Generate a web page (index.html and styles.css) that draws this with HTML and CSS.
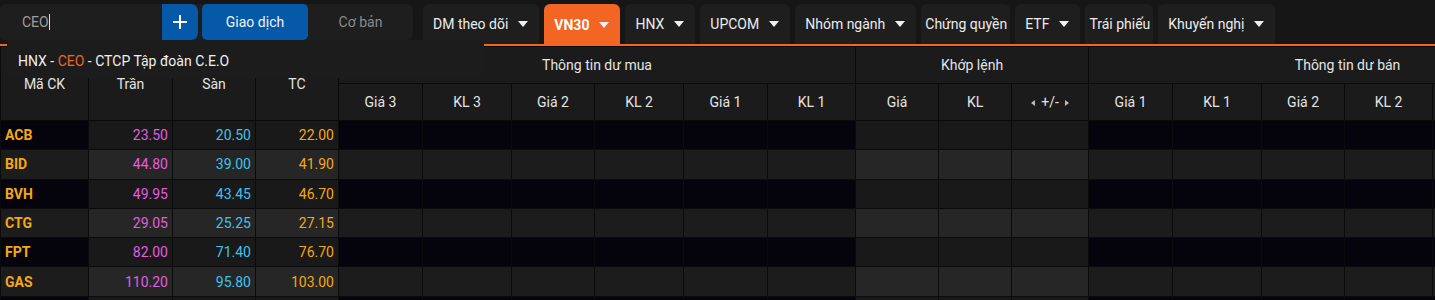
FILE: index.html
```html
<!DOCTYPE html>
<html lang="vi">
  <head>
    <meta charset="UTF-8" />
    <title>Bảng giá VN30</title>
    <link rel="stylesheet" href="styles.css">
  </head>
  <body>
    <header class="topbar">
      <div class="search">
        <div class="search-input">CEO<span class="cursor"></span></div>
        <button class="btn-add">
          <svg width="16" height="16" viewBox="0 0 16 16"><path d="M8 1v14M1 8h14" stroke="#fff" stroke-width="2" fill="none"/></svg>
        </button>
        <button class="btn-trade">Giao dịch</button>
        <button class="btn-basic">Cơ bản</button>
        <div class="suggest">HNX - <span class="hl">CEO</span> - CTCP Tập đoàn C.E.O</div>
      </div>

      <nav class="tabs">
        <div class="tab">DM theo dõi <i class="arrow"></i></div>
        <div class="tab active">VN30 <i class="arrow"></i></div>
        <div class="tab">HNX <i class="arrow"></i></div>
        <div class="tab">UPCOM <i class="arrow"></i></div>
        <div class="tab">Nhóm ngành <i class="arrow"></i></div>
        <div class="tab plain">Chứng quyền</div>
        <div class="tab">ETF <i class="arrow"></i></div>
        <div class="tab plain">Trái phiếu</div>
        <div class="tab">Khuyến nghị <i class="arrow"></i></div>
      </nav>
    </header>

    <div class="board">
      <table class="price">
        <colgroup>
          <col style="width:88px"><col style="width:84px"><col style="width:83px"><col style="width:83px">
          <col style="width:84px"><col style="width:89px"><col style="width:83px"><col style="width:89px"><col style="width:84px"><col style="width:88px">
          <col style="width:83px"><col style="width:73px"><col style="width:77px">
          <col style="width:84px"><col style="width:89px"><col style="width:83px"><col style="width:88px"><col style="width:84px"><col style="width:90px">
        </colgroup>
        <thead>
          <tr>
            <th rowspan="2">Mã CK</th>
            <th rowspan="2">Trần</th>
            <th rowspan="2">Sàn</th>
            <th rowspan="2">TC</th>
            <th colspan="6">Thông tin dư mua</th>
            <th colspan="3">Khớp lệnh</th>
            <th colspan="6">Thông tin dư bán</th>
          </tr>
          <tr>
            <th>Giá 3</th><th>KL 3</th><th>Giá 2</th><th>KL 2</th><th>Giá 1</th><th>KL 1</th>
            <th>Giá</th><th>KL</th><th><span class="tri left"></span> +/- <span class="tri right"></span></th>
            <th>Giá 1</th><th>KL 1</th><th>Giá 2</th><th>KL 2</th><th>Giá 3</th><th>KL 3</th>
          </tr>
        </thead>
        <tbody id="rows"></tbody>
      </table>
    </div>

    <script>
// VN30 rows: code, ceiling, floor, reference
const stocks = [
  ["ACB", "23.50", "20.50", "22.00"],
  ["BID", "44.80", "39.00", "41.90"],
  ["BVH", "49.95", "43.45", "46.70"],
  ["CTG", "29.05", "25.25", "27.15"],
  ["FPT", "82.00", "71.40", "76.70"],
  ["GAS", "110.20", "95.80", "103.00"],
  ["GVR", "35.30", "30.70", "33.00"]
];

const empty = (n, cls) => Array(n).fill(`<td class="${cls || ''}"></td>`).join('');

document.getElementById('rows').innerHTML = stocks.map(s => `
  <tr>
    <td class="code">${s[0]}</td>
    <td class="hi num ceil">${s[1]}</td>
    <td class="hi num floor">${s[2]}</td>
    <td class="hi num ref">${s[3]}</td>
    ${empty(6)}
    ${empty(3, 'hi')}
    ${empty(6)}
  </tr>`).join('');
    </script>
  </body>
</html>
```

FILE: styles.css
```css
body {
  margin: 0;
  background: #161616;
  color: #e6e6e6;
  font-family: Roboto, "Liberation Sans", sans-serif;
  font-size: 14px;
  overflow: hidden;
}

.topbar {
  display: flex;
  align-items: flex-start;
  height: 40px;
  padding-top: 4px;
  border-bottom: 2px solid #f26522;
}

/* search block */
.search {
  position: relative;
  display: flex;
  width: 413px;
  height: 36px;
  background: #1e1e1e;
  border-radius: 6px;
  flex-shrink: 0;
}
.search-input {
  width: 140px;
  padding-left: 22px;
  line-height: 36px;
  color: #9d9d9d;
}
.cursor {
  display: inline-block;
  width: 1px;
  height: 16px;
  background: #ddd;
  vertical-align: -3px;
}
.search button {
  border: none;
  font-family: inherit;
  font-size: 14px;
  height: 36px;
  cursor: pointer;
}
.btn-add {
  width: 36px;
  background: #0559a8;
  border-radius: 0 7px 7px 0;
  display: flex;
  align-items: center;
  justify-content: center;
  padding: 0;
}
.btn-trade {
  width: 106px;
  margin-left: 4px;
  background: #0559a8;
  color: #f2f2f2;
  border-radius: 5px;
}
.btn-basic {
  flex: 1;
  background: transparent;
  color: #8a8a8a;
}
.suggest {
  position: absolute;
  left: 7px;
  top: 36px;
  width: 466px;
  height: 38px;
  padding-left: 11px;
  line-height: 42px;
  background: #1c1c1c;
  border-radius: 0 0 8px 8px;
  color: #f0f0f0;
  z-index: 5;
}
.suggest .hl {
  color: #f26522;
}

/* market tabs */
.tabs {
  display: flex;
  gap: 5px;
  margin-left: 10px;
}
.tab {
  display: flex;
  align-items: center;
  height: 40px;
  padding: 0 11px 0 10px;
  background: #1e1e1e;
  border-radius: 6px 6px 0 0;
  color: #ececec;
  white-space: nowrap;
}
.tab.plain {
  padding: 0 3px 0 4px;
}
.tab.active {
  background: #f26522;
  color: #fff;
  font-weight: bold;
  height: 41px;
}
.arrow {
  width: 0;
  height: 0;
  margin-left: 10px;
  border-left: 5px solid transparent;
  border-right: 5px solid transparent;
  border-top: 6px solid #f0f0f0;
}

/* price board */
.board {
  overflow: hidden;
  width: 100%;
}
.price {
  table-layout: fixed;
  width: 1606px;
  border-collapse: collapse;
}
.price th {
  height: 36px;
  padding: 0;
  background: #1b1b1b;
  border: 1px solid #0a0a0a;
  font-weight: normal;
  color: #e4e4e4;
  text-align: center;
  white-space: nowrap;
}
.tri {
  display: inline-block;
  width: 0;
  height: 0;
  border-top: 3px solid transparent;
  border-bottom: 3px solid transparent;
  vertical-align: 1px;
}
.tri.left {
  border-right: 4px solid #bbb;
  margin-right: 3px;
}
.tri.right {
  border-left: 4px solid #bbb;
  margin-left: 3px;
}

.price td {
  height: 28.3px;
  padding: 0 4px;
  border: 1px solid #0b0b0b;
  background: #05040c;
  font-size: 14px;
  white-space: nowrap;
}
.price tbody tr:nth-child(even) td {
  background: #1c1c1c;
}
.price td.hi {
  background: #191919;
}
.price tbody tr:nth-child(even) td.hi {
  background: #262626;
}
.price td.code {
  font-weight: bold;
  color: #f5a816;
}
.num {
  text-align: right;
}
.ceil {
  color: #e35de0;
}
.floor {
  color: #3ec3ee;
}
.ref {
  color: #f5a816;
}
```
